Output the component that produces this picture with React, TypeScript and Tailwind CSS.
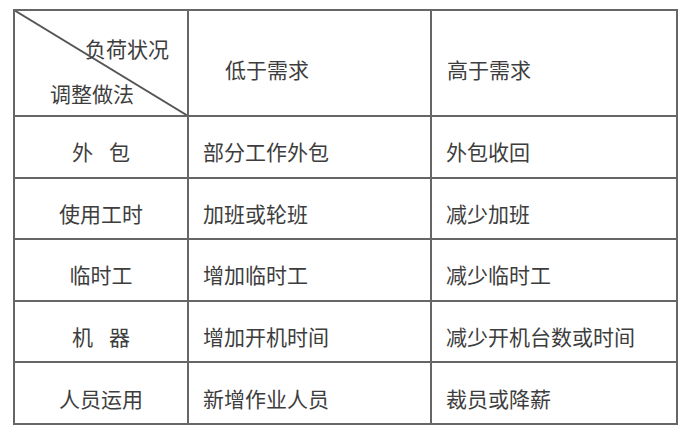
const rows: [string, string, string][] = [
  ["外|包", "部分工作外包", "外包收回"],
  ["使用工时", "加班或轮班", "减少加班"],
  ["临时工", "增加临时工", "减少临时工"],
  ["机|器", "增加开机时间", "减少开机台数或时间"],
  ["人员运用", "新增作业人员", "裁员或降薪"],
];

// "外|包" -> two chars with a gap between them
function Spaced({ text }: { text: string }) {
  const parts = text.split("|");
  if (parts.length === 1) return <>{text}</>;
  return (
    <span className="flex gap-[16px]">
      {parts.map((p) => (
        <span key={p}>{p}</span>
      ))}
    </span>
  );
}

export default function App() {
  return (
    <div
      className="w-[693px] h-[442px] bg-white pl-[13px] pt-[9px] text-[21px] leading-none text-[#3d3d3d]"
      style={{ fontFamily: '"Noto Sans CJK SC", "Noto Sans", sans-serif' }}
    >
      <div className="grid w-[665px] h-[416px] grid-cols-[172px_241px_244px] grid-rows-[104px_repeat(5,1fr)] gap-[2px] bg-[#666] p-[2px]">
        <div className="relative bg-white">
          <svg className="absolute inset-0 h-full w-full" viewBox="0 0 172 104" preserveAspectRatio="none">
            <line x1="-1" y1="-1" x2="173" y2="105" stroke="#555" strokeWidth="1.8" />
          </svg>
          <span className="absolute left-[70px] top-[27px]">负荷状况</span>
          <span className="absolute left-[35px] top-[72px]">调整做法</span>
        </div>
        <div className="flex items-center bg-white pl-[36px] pt-[12px]">低于需求</div>
        <div className="flex items-center bg-white pl-[15px] pt-[12px]">高于需求</div>
        {rows.map(([a, b, c]) => (
          <>
            <div key={a} className="flex items-center justify-center bg-white pt-[10px]">
              <Spaced text={a} />
            </div>
            <div key={b} className="flex items-center bg-white pl-[14px] pt-[10px]">{b}</div>
            <div key={c} className="flex items-center bg-white pl-[14px] pt-[10px]">{c}</div>
          </>
        ))}
      </div>
    </div>
  );
}
